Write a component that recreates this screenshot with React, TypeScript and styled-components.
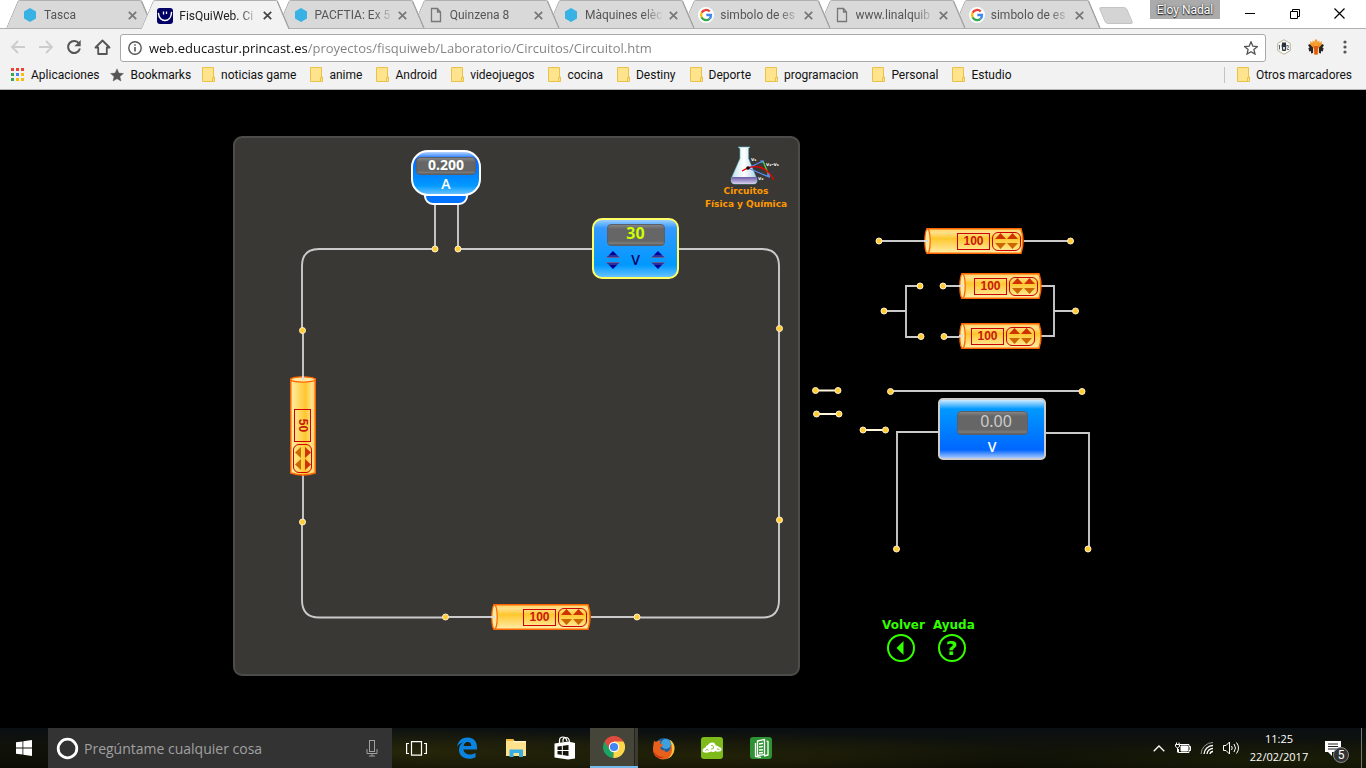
import React from "react";
import styled, { createGlobalStyle, css } from "styled-components";

const UI = `Roboto, "Open Sans", "Liberation Sans", sans-serif`;
const HUMANIST = `"Open Sans", "Noto Sans", sans-serif`;
const VERDANA = `"DejaVu Sans", "Liberation Sans", sans-serif`;
const METER = `"Noto Sans", "Open Sans", sans-serif`;

const GlobalStyle = createGlobalStyle`
  * { box-sizing: border-box; }
  html, body { margin: 0; background: #000; }
  body { font-family: ${UI}; font-size: 12px; color: #222; }
  button { border: 0; padding: 0; margin: 0; background: none; font: inherit; color: inherit; cursor: pointer; }
  input { border: 0; padding: 0; margin: 0; background: none; font: inherit; outline: 0; min-width: 0; }
  a { color: inherit; text-decoration: none; }
  svg { display: block; flex: none; }
`;

const Screen = styled.div`
  display: flex;
  flex-direction: column;
  min-height: 100vh;
  overflow: hidden;
`;

/* ---------- Tab strip ---------- */

const TabStrip = styled.header`
  display: flex;
  height: 29px;
  background: #fff;
  border-bottom: 1px solid #b0b0b0;
  padding-left: 6px;
`;

const Tabs = styled.nav`
  display: flex;
  flex: 0 1 1095px;
  min-width: 0;
  isolation: isolate;
`;

const TabBox = styled.div<{ $active?: boolean; $order: number }>`
  position: relative;
  z-index: ${(p) => (p.$active ? 50 : 20 - p.$order)};
  flex: 1 1 0;
  min-width: 0;
  display: flex;
  align-items: center;
  height: ${(p) => (p.$active ? 29 : 28)}px;
  padding: 2px 15px 0 16px;
  color: ${(p) => (p.$active ? "#222" : "#555")};
  & + & { margin-left: -13px; }

  &::before, &::after {
    content: "";
    position: absolute;
    z-index: -1;
    top: 0;
    bottom: 0;
    background: ${(p) => (p.$active ? "#f2f2f2" : "#d9d9d9")};
    border-top: 1px solid #b0b0b0;
  }
  &::before {
    left: 6px;
    right: 40%;
    border-left: 1px solid #a6a6a6;
    border-top-left-radius: 2px;
    transform: skewX(-23deg);
  }
  &::after {
    left: 40%;
    right: 6px;
    border-right: 2px solid #a6a6a6;
    border-top-right-radius: 2px;
    transform: skewX(23deg);
  }
`;

const TabLink = styled.a`
  flex: 1;
  min-width: 0;
  display: flex;
  align-items: center;
  gap: 6px;
`;

const TabTitle = styled.span`
  flex: 1;
  overflow: hidden;
  white-space: nowrap;
  line-height: 16px;
  mask-image: linear-gradient(90deg, #000 74%, transparent);
`;

const CloseButton = styled.button`
  width: 14px;
  height: 14px;
  margin-left: 2px;
  display: grid;
  place-items: center;
`;

const NewTab = styled.button`
  width: 28px;
  height: 17px;
  margin: 7px 0 0 1px;
  background: #d4d4d4;
  border: 1px solid #c4c4c4;
  border-radius: 3px;
  transform: skewX(23deg);
`;

const WindowControls = styled.div`
  margin-left: auto;
  padding-right: 4px;
  display: flex;
  align-items: flex-start;
`;

const UserTag = styled.button`
  width: 70px;
  height: 19px;
  background: #ababab;
  color: #fff;
  text-shadow: 0 0 2px #222, 0 1px 1px #222;
  line-height: 18px;
  margin-right: 7px;
`;

const WindowButton = styled.button`
  width: 45px;
  height: 27px;
  display: grid;
  place-items: center;
`;

/* ---------- Toolbar ---------- */

const Toolbar = styled.div`
  display: flex;
  align-items: center;
  height: 35px;
  padding: 0 10px 0 4px;
  background: #f2f2f2;
`;

const ToolButton = styled.button<{ $narrow?: boolean }>`
  width: ${(p) => (p.$narrow ? 22 : 28)}px;
  height: 28px;
  display: grid;
  place-items: center;
`;

const Extensions = styled.div`
  display: flex;
  gap: 4px;
`;

const AddressBox = styled.label`
  flex: 1;
  min-width: 0;
  height: 28px;
  margin: 2px 4px 0;
  padding: 0 7px;
  display: flex;
  align-items: center;
  gap: 7px;
  background: #fff;
  border: 1px solid #a9a9a9;
  border-radius: 3px;
`;

const AddressInput = styled.input`
  flex: 1;
  height: 24px;
  font-family: ${HUMANIST};
  font-size: 13px;
  color: #6f6f6f;
  -webkit-text-fill-color: transparent;
  background-image: linear-gradient(90deg, #111 158px, #808080 158px);
  -webkit-background-clip: text;
  background-clip: text;
`;

const BookmarkBar = styled.nav`
  display: flex;
  align-items: center;
  height: 26px;
  padding: 0 14px 4px 11px;
  background: #f2f2f2;
  border-bottom: 1px solid #b6b6b6;
`;

const Bookmark = styled.a<{ $tight?: boolean }>`
  display: flex;
  align-items: center;
  gap: 6px;
  margin-right: ${(p) => (p.$tight ? 11 : 14)}px;
  color: #111;
  line-height: 16px;
  white-space: nowrap;
  &:last-child { margin-right: 0; }
`;

const BookmarkDivider = styled.span`
  width: 1px;
  height: 16px;
  margin: 0 12px 0 auto;
  background: #c4c4c4;
`;

/* ---------- Circuit board ---------- */

const Page = styled.main`
  flex: 1;
  display: flex;
  justify-content: center;
  background: #000;
`;

const Board = styled.div`
  position: relative;
  flex: none;
  width: 1000px;
  min-height: 638px;
`;

const Placed = styled.div<{ $x: number; $y: number; $turned?: boolean }>`
  position: absolute;
  left: ${(p) => p.$x}px;
  top: ${(p) => p.$y}px;
  ${(p) => p.$turned && css`transform: rotate(90deg);`}
`;

const Panel = styled.div`
  width: 567px;
  height: 540px;
  background: #3a3834;
  border: 2px solid #4c4c4a;
  border-radius: 9px;
`;

const WireLayer = styled.svg`
  position: absolute;
  inset: 0;
`;

const Display = styled.output<{ $w: number; $h: number; $size: number; $bold?: boolean; $color: string; $indent?: number }>`
  display: block;
  width: ${(p) => p.$w}px;
  height: ${(p) => p.$h}px;
  padding-left: ${(p) => p.$indent ?? 0}px;
  line-height: ${(p) => p.$h - 5}px;
  font-family: ${METER};
  font-size: ${(p) => p.$size}px;
  font-weight: ${(p) => (p.$bold ? 700 : 400)};
  text-align: center;
  color: ${(p) => p.$color};
  background: linear-gradient(#858585, #666 4px, #666 80%, #7c7c7c 92%, #5a5a5a);
  border: 1px solid #5b5f68;
  border-radius: 4px;
`;

const Unit = styled.span<{ $color: string }>`
  font-family: ${HUMANIST};
  font-size: 14px;
  font-weight: 600;
  line-height: 18px;
  color: ${(p) => p.$color};
`;

const AmmeterCase = styled.div`
  width: 70px;
  height: 46px;
  display: flex;
  flex-direction: column;
  align-items: center;
  padding-top: 5px;
  border: 2px solid #fff;
  border-radius: 17px;
  background: linear-gradient(#b8d4ff, #0066ff 7px, #0099ff 80%, #66c2ff);
`;

const AmmeterBase = styled.div`
  width: 44px;
  height: 11px;
  margin: -2px auto 0;
  border: 2px solid #fff;
  border-radius: 0 0 9px 9px;
  background: #0073ff;
`;

const SourceCase = styled.div`
  width: 87px;
  height: 61px;
  display: flex;
  flex-direction: column;
  align-items: center;
  padding-top: 4px;
  border: 2px solid #ffff66;
  border-radius: 10px;
  background: linear-gradient(#9ccfff, #3399ff 8px, #0099ff 45px, #66c2ff);
`;

const SourceControls = styled.div`
  width: 60px;
  margin-top: 5px;
  display: flex;
  align-items: center;
  justify-content: space-between;
`;

const ArrowPair = styled.div`
  display: flex;
  flex-direction: column;
  gap: 4px;
`;

const ArrowButton = styled.button`
  display: block;
`;

const VoltmeterCase = styled.div`
  width: 108px;
  height: 62px;
  display: flex;
  flex-direction: column;
  align-items: center;
  gap: 3px;
  padding-top: 11px;
  border: 2px solid #ccc;
  border-radius: 5px;
  background: linear-gradient(#cfeaff, #0099ff 9px, #0066ff 50px, #a8c8ff);
`;

const ResistorBody = styled.div<{ $w: number; $pad: number }>`
  position: relative;
  width: ${(p) => p.$w}px;
  height: 26px;
  padding-left: ${(p) => p.$pad}px;
  display: flex;
  align-items: center;
  gap: 2px;
`;

const ResistorShape = styled.svg`
  position: absolute;
  inset: 0;
`;

const OhmInput = styled.input`
  position: relative;
  width: 33px;
  height: 17px;
  border: 1px solid #c00;
  font-family: "Liberation Sans", sans-serif;
  font-size: 12px;
  font-weight: 700;
  text-align: center;
  color: #c8180c;
`;

const Stepper = styled.div`
  position: relative;
  width: 29px;
  height: 19px;
  padding: 0 2px;
  display: grid;
  grid-template-columns: 11px 11px;
  align-content: center;
  justify-content: space-between;
  row-gap: 4px;
  border: 1px solid #c00;
  border-radius: 6px;
`;

const Brand = styled.div`
  width: 86px;
  display: flex;
  flex-direction: column;
  align-items: center;
  font-family: ${VERDANA};
  font-size: 9px;
  font-weight: 700;
  line-height: 13px;
  color: #ff9900;
  white-space: nowrap;
  & > svg { align-self: flex-end; margin-right: 3px; }
`;

const NavLinks = styled.nav`
  display: flex;
  gap: 8px;
`;

const NavLink = styled.a`
  display: flex;
  flex-direction: column;
  align-items: flex-start;
  gap: 1px;
  font-family: ${VERDANA};
  font-size: 12px;
  font-weight: 700;
  line-height: 16px;
  color: #33ff00;
`;

const Round = styled.span`
  width: 28px;
  height: 28px;
  margin-left: 5px;
  display: grid;
  place-items: center;
  border: 2px solid #33ff00;
  border-radius: 50%;
  font-size: 20px;
  line-height: 24px;
`;

/* ---------- Taskbar ---------- */

const Taskbar = styled.footer`
  display: flex;
  height: 40px;
  color: #fff;
  background:
    radial-gradient(ellipse 300px 26px at 30% 60%, #26260a, transparent),
    radial-gradient(ellipse 340px 24px at 52% 70%, #222208, transparent),
    radial-gradient(ellipse 300px 20px at 94% 80%, #1a1d07, transparent),
    linear-gradient(#0a0f13, #11130a 50%, #0c0c04);
`;

const TaskButton = styled.button<{ $active?: boolean }>`
  width: 48px;
  height: 40px;
  display: grid;
  place-items: center;
  ${(p) => p.$active && css`
    background: linear-gradient(90deg, #45453a 44px, #23231a 44px, #23231a 45px, #3b3b31 45px);
    border-bottom: 2px solid #76b9ed;
  `}
`;

const SearchBox = styled.label`
  flex: 0 1 344px;
  min-width: 0;
  display: flex;
  align-items: center;
  gap: 5px;
  padding: 0 14px 0 8px;
  background: #333;
`;

const SearchInput = styled.input`
  flex: 1;
  height: 24px;
  font-family: ${HUMANIST};
  font-size: 14px;
  color: #fff;
  &::placeholder { color: #a0a0a0; opacity: 1; }
`;

const TaskApps = styled.div`
  display: flex;
  gap: 1px;
  margin-left: 3px;
`;

const Tray = styled.div`
  margin-left: auto;
  display: flex;
  align-items: center;
`;

const TrayButton = styled.button`
  width: 24px;
  height: 40px;
  display: grid;
  place-items: center;
`;

const Clock = styled.time`
  width: 72px;
  text-align: center;
  font-family: ${HUMANIST};
  font-size: 11px;
  line-height: 18px;
  white-space: nowrap;
`;

const Notifications = styled.button`
  position: relative;
  width: 36px;
  height: 40px;
  margin: 0 10px 0 0;
  display: grid;
  place-items: center;
`;

const Badge = styled.span`
  position: absolute;
  left: 18px;
  top: 19px;
  width: 16px;
  height: 16px;
  border: 1px solid #888;
  border-radius: 50%;
  background: #333;
  font-size: 12px;
  line-height: 14px;
`;

const ShowDesktop = styled.button`
  width: 5px;
  height: 40px;
  border-left: 1px solid #777;
`;

/* ---------- Icons ---------- */

const Hexagon = () => (
  <svg width="16" height="16" viewBox="0 0 16 16"><path d="M8 1l6 3.500v7L8 15l-6-3.500v-7z" fill="#38b1e5" /></svg>
);
const Smile = () => (
  <svg width="16" height="16" viewBox="0 0 16 16">
    <rect width="16" height="16" rx="3" fill="#000066" />
    <path d="M1.500 5.500C2 15 14 15 14.500 4.500" fill="none" stroke="#fff" strokeWidth="1.500" strokeLinecap="round" />
    <path d="M6.500 3.500v3M9.500 3.500v2.500" stroke="#fff" strokeWidth="1.300" />
  </svg>
);
const PageIcon = () => (
  <svg width="16" height="16" viewBox="0 0 16 16">
    <path d="M3.500 1.500h6l3 3.500v9.500h-9zM9.500 1.500V5h3" fill="none" stroke="#777" strokeWidth="1.300" />
  </svg>
);
const Google = () => (
  <svg width="16" height="16" viewBox="0 0 16 16">
    <circle cx="8" cy="8" r="8" fill="#fff" />
    <g fill="none" strokeWidth="2.300">
      <path d="M11.700 4.500A5 5 0 0 0 3.600 5.800" stroke="#ea4335" />
      <path d="M3.600 5.800a5 5 0 0 0 0 4.400" stroke="#fbbc05" />
      <path d="M3.600 10.200a5 5 0 0 0 7.900 1.600" stroke="#34a853" />
      <path d="M11.500 11.800A5 5 0 0 0 13 8H8.300" stroke="#4285f4" />
    </g>
  </svg>
);
const Cross = ({ color = "#666" }) => (
  <svg width="9" height="9" viewBox="0 0 9 9"><path d="M.8.8l7.400 7.400M8.200.8L.8 8.200" stroke={color} strokeWidth="1.700" /></svg>
);
const Folder = () => (
  <svg width="13" height="15" viewBox="0 0 13 15">
    <path d="M.5.500h11v9.500h1v4.500H.5z" fill="#ffe48d" stroke="#e9c24a" />
    <path d="M10.500 14V10.500h1.500" fill="none" stroke="#e9c24a" />
  </svg>
);
const AppsGrid = () => {
  const colors = ["#ea4335", "#ea4335", "#ea4335", "#34a853", "#4285f4", "#fbbc05", "#34a853", "#fbbc05", "#fbbc05"];
  return (
    <svg width="14" height="14" viewBox="0 0 14 14">
      {colors.map((c, i) => <rect key={i} x={(i % 3) * 5} y={Math.floor(i / 3) * 5} width="3" height="3" fill={c} />)}
    </svg>
  );
};
const Star = ({ filled = false }) => (
  <svg width="14" height="14" viewBox="0 0 14 14">
    <path d="M7 .8l1.800 4.300 4.700.4-3.600 3 1.100 4.600L7 10.700l-4 2.400 1.100-4.600-3.600-3 4.700-.4z"
      fill={filled ? "#555" : "none"} stroke="#555" strokeWidth={filled ? 0.4 : 1.3} />
  </svg>
);
const BackArrow = ({ flip = false }) => (
  <svg width="16" height="14" viewBox="0 0 16 14">
    <path d={flip ? "M1 7h13M8 1l6 6-6 6" : "M15 7H2M8 1L2 7l6 6"} fill="none" stroke="#ccc" strokeWidth="1.800" />
  </svg>
);
const Reload = () => (
  <svg width="16" height="16" viewBox="0 0 16 16">
    <path d="M13 4.500A6 6 0 1 0 13.900 9.500" fill="none" stroke="#555" strokeWidth="2" />
    <path d="M14.700 1v6.300H8.400z" fill="#555" />
  </svg>
);
const Home = () => (
  <svg width="17" height="16" viewBox="0 0 17 16">
    <path d="M1.500 8.500l7-7 7 7h-2.700V15H4.200V8.500z" fill="none" stroke="#555" strokeWidth="1.800" strokeLinejoin="round" />
  </svg>
);
const Info = () => (
  <svg width="14" height="14" viewBox="0 0 14 14">
    <circle cx="7" cy="7" r="6.200" fill="none" stroke="#555" strokeWidth="1.400" />
    <path d="M7 6v4.500M7 3.300v1.500" stroke="#555" strokeWidth="1.600" />
  </svg>
);
const HexBadge = () => (
  <svg width="16" height="16" viewBox="0 0 16 16">
    <path d="M8 .7l6.300 3.700v7.200L8 15.300l-6.300-3.700V4.400z" fill="#fbfbf5" stroke="#b8b49c" />
    <path d="M6 3.500h4v2l.5.500-.8 6H6.300l-.8-6 .5-.5z" fill="#2b323d" />
    <path d="M3.500 6v4.500M2.800 6.500h.7M13 10.500h-1.800V9.500l1-1V6.500h-1.200" fill="none" stroke="#596170" />
    <path d="M7 8h2v2.500H7z" fill="#d5d8dc" />
  </svg>
);
const OrangeExt = () => (
  <svg width="16" height="16" viewBox="0 0 16 16">
    <path d="M0 6l2-1 3 2v7l-2 .5V12L1 12.500v-2L0 10l1.500-1.500zM16 6l-2-1-3 2v7l2 .5V12l2 .5v-2l1-.5-1.500-1.500z" fill="#2a2422" />
    <path d="M2 2l2.500 2V1.500L6.500 3 7 .500h2l.5 2.500 2-1.500V4L14 2l-.5 4-3 3-.5 6.500H6L5.500 9l-3-3z" fill="#f59a2a" />
    <path d="M5 6l2 2V4h2v4l2-2-1.200 4L9.500 15.500h-3L6.200 10z" fill="#dc5a12" />
    <path d="M7.400 3.500h1.200V7H7.400z" fill="#ffd070" />
  </svg>
);
const Dots = () => (
  <svg width="4" height="14" viewBox="0 0 4 14" fill="#555"><circle cx="2" cy="2" r="1.600" /><circle cx="2" cy="7" r="1.600" /><circle cx="2" cy="12" r="1.600" /></svg>
);
const Triangle = ({ w, h, down = false, color }: { w: number; h: number; down?: boolean; color: string }) => (
  <svg width={w} height={h} viewBox={`0 0 ${w} ${h}`}>
    <path d={down ? `M0 0H${w}L${w / 2} ${h}z` : `M0 ${h}H${w}L${w / 2} 0z`} fill={color} />
  </svg>
);
const SourceTriangle = ({ down = false }) => (
  <svg width="14" height="7" viewBox="0 0 14 7">
    <path d={down ? "M0 0H14L7 7z" : "M0 7H14L7 0z"} fill="#000099" />
    <path d={down ? "M0 .5H14M1.500 2H12.500" : "M0 6.500H14M1.500 5H12.500"} stroke="#77779c" strokeWidth=".8" />
  </svg>
);
const PlayLeft = () => (
  <svg width="24" height="24" viewBox="0 0 24 24"><path d="M14.500 5v14L7.500 12z" fill="#33ff00" /></svg>
);
const Flask = () => (
  <svg width="56" height="39" viewBox="0 0 56 39">
    <defs>
      <linearGradient id="glass"><stop offset="0" stopColor="#bfe3ea" /><stop offset=".5" stopColor="#fff" /><stop offset="1" stopColor="#a9cfe6" /></linearGradient>
      <linearGradient id="liquid" x1="0" y1="0" x2="0" y2="1"><stop offset="0" stopColor="#6a5aa8" /><stop offset="1" stopColor="#d9d2ee" /></linearGradient>
    </defs>
    <path d="M8 1h12l-1.500 1.500v10L26.500 32q2 6-3 6H5q-5 0-3.500-6L10 12.500v-10z" fill="url(#glass)" stroke="#5fb8c8" strokeWidth=".6" />
    <path d="M2 31h24.300q2 7-3 7H5q-5 0-3-7z" fill="url(#liquid)" />
    <path d="M18 22L33 15M18 22l21 9" stroke="#5a8cf0" strokeWidth="1.300" />
    <path d="M33 15l6.500 16" stroke="#5ad13c" strokeWidth="1.300" />
    <path d="M12 25q20-12 32 9" fill="none" stroke="#e00" strokeWidth="1.400" />
    <path d="M36 29.500l4 2.500-1-5zM30 14.500l4 0-2 3z" fill="#5a8cf0" />
    <circle cx="18" cy="22" r="1.800" fill="#200" />
    <g fill="#fff" fontFamily="DejaVu Sans, sans-serif" fontSize="5" fontWeight="700">
      <text x="21" y="15">v₁</text><text x="36" y="20">v₂-v₁</text><text x="28" y="34">v₂</text>
    </g>
  </svg>
);

/* ---------- Circuit parts ---------- */

function Resistor({ value, width = 100, pad = 33, name }: { value: string; width?: number; pad?: number; name: string }) {
  const gid = `body-${name.replace(/\s/g, "")}`;
  return (
    <ResistorBody $w={width} $pad={pad}>
      <ResistorShape width={width} height="26" viewBox={`0 0 ${width} 26`} aria-hidden="true">
        <defs>
          <linearGradient id={gid} x1="0" y1="0" x2="0" y2="1">
            <stop offset="0" stopColor="#ffd260" /><stop offset=".15" stopColor="#ffe08a" />
            <stop offset=".4" stopColor="#ffc72e" /><stop offset="1" stopColor="#ffeeaa" />
          </linearGradient>
        </defs>
        <path d={`M3 .8H${width - 3}Q${width + 1} 13 ${width - 3} 25.200H3z`} fill={`url(#${gid})`} stroke="#ff6600" strokeWidth="1.500" />
        <ellipse cx="3.500" cy="13" rx="2.700" ry="12.200" fill="#ffe9a0" stroke="#ff6600" strokeWidth="1.200" />
        <path d="M0 13h4" stroke="#ddd" strokeWidth="2" />
      </ResistorShape>
      <OhmInput defaultValue={value} aria-label={name} />
      <Stepper>
        <ArrowButton aria-label="Subir decenas"><Triangle w={11} h={6} color="#cc3300" /></ArrowButton>
        <ArrowButton aria-label="Subir unidades"><Triangle w={11} h={6} color="#cc3300" /></ArrowButton>
        <ArrowButton aria-label="Bajar decenas"><Triangle w={11} h={6} down color="#cc6600" /></ArrowButton>
        <ArrowButton aria-label="Bajar unidades"><Triangle w={11} h={6} down color="#cc6600" /></ArrowButton>
      </Stepper>
    </ResistorBody>
  );
}

const wires = [
  "M252 159H136Q119 159 119 176V240",
  "M120 240V287M120 385V432",
  "M119 432V510Q119 527.500 136 527.500H262",
  "M262 527H309M408 527H454",
  "M454 527.500H580Q596 527.500 596 510V176Q596 159 579 159H495",
  "M252 115V158M275 115V158M275 159H410",
  "M696 151H741M841 151H887",
  "M701 221H723M737 196H723V247H738M760 196H777M761 247H777",
  "M858 196H871V246H858M871 221H892",
  "M708 301H899",
  "M755 342H714V459M863 343H906V459",
];
const jumpers = ["M633 300.500H655", "M634 324H656", "M680 340H702"];
const terminals = [
  [252, 159], [275, 159], [119.5, 240.5], [119.5, 432], [262.5, 527], [454, 527], [596.5, 238.500], [596.5, 430],
  [696, 151], [887.5, 151], [701, 221], [737, 196], [738, 246.500], [760, 196], [761, 246.500], [892.5, 221],
  [632.5, 300.500], [655, 300.500], [633.5, 324], [656, 324], [680, 340], [702.5, 340], [707.5, 301.500], [899, 301.500],
  [713.5, 459], [905, 459],
];

const Wires = () => (
  <WireLayer width="1000" height="638" viewBox="0 0 1000 638" aria-hidden="true">
    <g fill="none" stroke="#cacaca" strokeWidth="1.900">
      {wires.map((d) => <path key={d} d={d} />)}
    </g>
    <g stroke="#fff6dd" strokeWidth="2">{jumpers.map((d) => <path key={d} d={d} />)}</g>
    <g fill="#ffcc33" stroke="#fff0cc" strokeWidth="1">
      {terminals.map(([x, y]) => <circle key={`${x}-${y}`} cx={x} cy={y} r="3" />)}
    </g>
  </WireLayer>
);

const SourceArrows = ({ name }: { name: string }) => (
  <ArrowPair>
    <ArrowButton aria-label={`Subir ${name}`}><SourceTriangle /></ArrowButton>
    <ArrowButton aria-label={`Bajar ${name}`}><SourceTriangle down /></ArrowButton>
  </ArrowPair>
);

/* ---------- Data ---------- */

const tabs = [
  { icon: <Hexagon />, title: "Tasca" },
  { icon: <Smile />, title: "FisQuiWeb. Ci", active: true },
  { icon: <Hexagon />, title: "PACFTIA: Ex 5" },
  { icon: <PageIcon />, title: "Quinzena 8" },
  { icon: <Hexagon />, title: "Màquines elèc" },
  { icon: <Google />, title: "simbolo de es" },
  { icon: <PageIcon />, title: "www.linalquib" },
  { icon: <Google />, title: "simbolo de es" },
];

const folders = ["noticias game", "anime", "Android", "videojuegos", "cocina", "Destiny", "Deporte", "programacion", "Personal", "Estudio"];

const WindowsLogo = () => (
  <svg width="16" height="16" viewBox="0 0 16 16" fill="#fff"><path d="M0 2.300L6.500 1.400V7.600H0zM7.300 1.300L16 0v7.600H7.300zM0 8.400h6.500v6.200L0 13.700zM7.300 8.400H16V16l-8.700-1.200z" /></svg>
);
const Cortana = () => (
  <svg width="23" height="23" viewBox="0 0 23 23"><circle cx="11.500" cy="11.500" r="9.300" fill="none" stroke="#fff" strokeWidth="2.800" /></svg>
);
const Mic = () => (
  <svg width="12" height="17" viewBox="0 0 12 17" fill="none" stroke="#a0a0a0"><rect x="3.500" y=".5" width="5" height="11" /><path d="M1 9v4.500h10V9M6 13.500V16M3 16h6" /></svg>
);
const TaskView = () => (
  <svg width="21" height="15" viewBox="0 0 21 15" fill="none" stroke="#fff" strokeWidth="1.200"><path d="M5.500.600h10v13.500h-10zM3 2.500H.6v10H3M18 2.500h2.400v10H18" /></svg>
);
const Edge = () => (
  <svg width="22" height="22" viewBox="0 0 22 22" fill="#0a84e0">
    <path d="M1 10C2 3.500 6.500.500 11.500.500 17.500.500 21 4.500 21 10v2.500H7.500c.3 3.500 3.300 5 6.500 5 2.200 0 4.200-.7 5.500-1.500v4.300c-1.500.8-3.800 1.500-6.500 1.500-6 0-10-3.500-10-9 0-3.300 1.700-6 4.500-7.500C4.500 6 2.200 7.700 1 10zM7.600 9h7.700c0-2.500-1.400-4-3.700-4S7.900 6.700 7.600 9z" />
  </svg>
);
const Explorer = () => (
  <svg width="22" height="20" viewBox="0 0 22 20">
    <path d="M1 1h7l1.500 2H21v15H1z" fill="#ffe08c" /><path d="M1 1h7l1.500 2H1z" fill="#f2b93c" /><path d="M8 3h13v1.500H8z" fill="#fff3c8" />
    <path d="M4.500 11.500h13.500V19h-4v-4h-5.500v4h-4z" fill="#35aee4" />
  </svg>
);
const Store = () => (
  <svg width="22" height="24" viewBox="0 0 22 24">
    <path d="M5.500 7V4.500Q5.500 1 9 1q3 0 4 4M9 6V4q0-2.500 3-2.500T15.500 6" fill="none" stroke="#fff" strokeWidth="1.200" />
    <path d="M.5 7.500L14 5.500l7 1.500v15.500l-7 1L.5 21.500z" fill="#fff" />
    <path d="M3.500 10.500l4.300-.6v4H3.500zM8.800 9.800l5.700-.8v4.900H8.800zM3.500 14.900h4.300v4l-4.300-.6zM8.800 14.900h5.700v5l-5.700-.9z" fill="#14140a" />
  </svg>
);
const Chrome = () => (
  <svg width="22" height="22" viewBox="0 0 22 22">
    <path d="M11 11L1.500 5.500A11 11 0 0 1 20.500 5.500z" fill="#e04b3d" />
    <path d="M11 11L1.500 5.500A11 11 0 0 0 10.500 22z" fill="#1da362" />
    <path d="M11 11l-.5 11A11 11 0 0 0 20.500 5.500H11z" fill="#ffd54a" />
    <path d="M1.500 5.500L6.800 13.500 11 6z" fill="#e04b3d" /><path d="M10.500 22l4.500-8.500L11 14z" fill="#ffd54a" />
    <circle cx="11" cy="11" r="5.200" fill="#fff" /><circle cx="11" cy="11" r="4.100" fill="#4285f4" />
  </svg>
);
const Firefox = () => (
  <svg width="23" height="23" viewBox="0 0 23 23">
    <circle cx="12" cy="11" r="10" fill="#1b5f9f" /><circle cx="14" cy="7" r="5" fill="#3ea1dd" />
    <path d="M2 3.500c.6.800 1.500 1.300 2.500 1.300C6 3.600 7.500 3.500 9 4L7.800 6.300 11 7.800c.3 1.500-2.500 1.700-2.500 3.200 0 2.300 3 2.500 4.500 2-1 2 1 2.500 3 1.500 2.500-1.500 3-4 2.500-7C21 9.500 21.500 12 21 15c-1.500 4.500-5.500 7.500-10 7.500C5 22 1 18 1 12.500 1 9 1.700 7 2 3.500z" fill="#e8601c" />
    <path d="M17.500 2.500c4 2.500 5.500 6 5 10A11 11 0 0 1 13 22.500c5-2 7-5.500 7-10 0-4-1-7-2.500-10z" fill="#ffc03a" />
    <path d="M2 14.500c2.500 4.500 6 6 10.500 5-5 3.500-9.500.5-10.500-5z" fill="#c93413" />
  </svg>
);
const CloudApp = () => (
  <svg width="22" height="22" viewBox="0 0 22 22">
    <rect width="22" height="22" rx="3" fill="#7fba1b" />
    <path d="M2 15q-1.500-3.500 2.500-4.500 0-2 2.500-2.500Q8.500 5 11.500 5.500q3 .3 3 3 2.500-.2 3.500 1.500 3 .5 2.500 3-1 2-3 1.500-2 .7-3-.7-1.500 2-4 .7Q6 16.500 2 15z" fill="#fff" />
    <path d="M4.500 13.500q1.500-2 3-.5M10 8.500q2-1 2.500 1.500T10 12M16 12q2-.5 2 1" fill="none" stroke="#7fba1b" strokeWidth=".9" />
  </svg>
);
const BookApp = () => (
  <svg width="22" height="22" viewBox="0 0 22 22">
    <rect width="22" height="22" rx="3" fill="#2f9232" />
    <path d="M7.500 4l7-1.500v15l-7 1zM5.500 6v13.500l5.500.8M16.500 4l1.500.5V18l-4 1" fill="none" stroke="#fff" strokeWidth="1.300" />
    <path d="M9 7l4-.8M9 10l4-.5M9 13l4-.3M9 16l4-.5" stroke="#fff" strokeWidth="1.400" />
  </svg>
);

const taskApps = [
  { name: "Edge", icon: <Edge /> },
  { name: "Explorador", icon: <Explorer /> },
  { name: "Tienda", icon: <Store /> },
  { name: "Chrome", icon: <Chrome />, active: true },
  { name: "Firefox", icon: <Firefox /> },
  { name: "Nube", icon: <CloudApp /> },
  { name: "Libro digital", icon: <BookApp /> },
];

export default function App() {
  return (
    <Screen>
      <GlobalStyle />
      <TabStrip>
        <Tabs>
          {tabs.map((t, i) => (
            <TabBox key={i} $order={i} $active={t.active}>
              <TabLink href="#">{t.icon}<TabTitle>{t.title}</TabTitle></TabLink>
              <CloseButton aria-label="Cerrar pestaña"><Cross color={t.active ? "#444" : "#777"} /></CloseButton>
            </TabBox>
          ))}
        </Tabs>
        <NewTab aria-label="Nueva pestaña" />
        <WindowControls>
          <UserTag>Eloy Nadal</UserTag>
          <WindowButton aria-label="Minimizar"><svg width="10" height="10"><path d="M0 4.500h10" stroke="#000" /></svg></WindowButton>
          <WindowButton aria-label="Restaurar"><svg width="10" height="10" fill="none" stroke="#000"><path d="M.5 2.500h7v7h-7zM2.500 2V.500h7v7H8" /></svg></WindowButton>
          <WindowButton aria-label="Cerrar"><svg width="11" height="11"><path d="M.5.500l10 10M10.500.500l-10 10" stroke="#000" strokeWidth="1.200" /></svg></WindowButton>
        </WindowControls>
      </TabStrip>

      <Toolbar>
        <ToolButton aria-label="Atrás"><BackArrow /></ToolButton>
        <ToolButton aria-label="Adelante"><BackArrow flip /></ToolButton>
        <ToolButton aria-label="Recargar"><Reload /></ToolButton>
        <ToolButton aria-label="Inicio"><Home /></ToolButton>
        <AddressBox>
          <Info />
          <AddressInput aria-label="Dirección" defaultValue="web.educastur.princast.es/proyectos/fisquiweb/Laboratorio/Circuitos/Circuitol.htm" />
          <Star />
        </AddressBox>
        <Extensions>
          <ToolButton aria-label="Extensión"><HexBadge /></ToolButton>
          <ToolButton aria-label="Extensión"><OrangeExt /></ToolButton>
          <ToolButton $narrow aria-label="Menú"><Dots /></ToolButton>
        </Extensions>
      </Toolbar>

      <BookmarkBar>
        <Bookmark $tight href="#"><AppsGrid />Aplicaciones</Bookmark>
        <Bookmark $tight href="#"><Star filled />Bookmarks</Bookmark>
        {folders.map((f) => <Bookmark key={f} href="#"><Folder />{f}</Bookmark>)}
        <BookmarkDivider />
        <Bookmark href="#"><Folder />Otros marcadores</Bookmark>
      </BookmarkBar>

      <Page>
        <Board>
          <Placed $x={50} $y={46}><Panel /></Placed>
          <Wires />
          <Placed $x={228} $y={60}>
            <AmmeterCase>
              <Display $w={60} $h={18} $size={14} $bold $color="#fff">0.200</Display>
              <Unit $color="#fff">A</Unit>
            </AmmeterCase>
            <AmmeterBase />
          </Placed>
          <Placed $x={409} $y={128}>
            <SourceCase>
              <Display $w={58} $h={22} $size={16} $bold $color="#ccff00">30</Display>
              <SourceControls>
                <SourceArrows name="decenas" />
                <Unit $color="#000066">V</Unit>
                <SourceArrows name="unidades" />
              </SourceControls>
            </SourceCase>
          </Placed>
          <Placed $x={520} $y={56}>
            <Brand><Flask /><span>Circuitos</span><span>Física y Química</span></Brand>
          </Placed>
          <Placed $x={70} $y={323} $turned><Resistor value="50" name="Resistencia 1" /></Placed>
          <Placed $x={308} $y={514}><Resistor value="100" pad={32} name="Resistencia 2" /></Placed>
          <Placed $x={741} $y={138}><Resistor value="100" name="Resistencia 3" /></Placed>
          <Placed $x={776} $y={183}><Resistor value="100" width={83} pad={15} name="Resistencia 4" /></Placed>
          <Placed $x={776} $y={233}><Resistor value="100" width={83} pad={12} name="Resistencia 5" /></Placed>
          <Placed $x={755} $y={308}>
            <VoltmeterCase>
              <Display $w={71} $h={24} $size={16} $indent={8} $color="#ccc">0.00</Display>
              <Unit $color="#fff">V</Unit>
            </VoltmeterCase>
          </Placed>
          <Placed $x={699} $y={527}>
            <NavLinks>
              <NavLink href="#">Volver<Round><PlayLeft /></Round></NavLink>
              <NavLink href="#">Ayuda<Round>?</Round></NavLink>
            </NavLinks>
          </Placed>
        </Board>
      </Page>

      <Taskbar>
        <TaskButton aria-label="Inicio"><WindowsLogo /></TaskButton>
        <SearchBox>
          <Cortana />
          <SearchInput aria-label="Buscar" placeholder="Pregúntame cualquier cosa" />
          <Mic />
        </SearchBox>
        <TaskButton aria-label="Vista de tareas"><TaskView /></TaskButton>
        <TaskApps>
          {taskApps.map((a) => <TaskButton key={a.name} aria-label={a.name} $active={a.active}>{a.icon}</TaskButton>)}
        </TaskApps>
        <Tray>
          <TrayButton aria-label="Mostrar iconos ocultos"><svg width="12" height="7" fill="none" stroke="#fff" strokeWidth="1.300"><path d="M.7 6.300L6 1l5.300 5.300" /></svg></TrayButton>
          <TrayButton aria-label="Batería"><svg width="16" height="12" fill="none" stroke="#fff"><path d="M4.500 2.500h9.500v8H3.500V7M14 4.500h1.500v4H14M1.500.500v2M4 .500v2M.5 2.500h4v2l-2 1.500-2-1.500zM2.500 6v4.500" /><path d="M6 4h6.500v5H6z" fill="#fff" /></svg></TrayButton>
          <TrayButton aria-label="Red"><svg width="14" height="14" fill="none" stroke="#fff"><path d="M1 13A12 12 0 0 1 13 1.500" stroke="#999" /><path d="M4 13a9 9 0 0 1 9-8.500M7 13a6 6 0 0 1 6-5.500M10 13a3 3 0 0 1 3-2.500" strokeWidth="1.300" /></svg></TrayButton>
          <TrayButton aria-label="Volumen"><svg width="17" height="14" fill="none" stroke="#fff"><path d="M.5 4.500H3L6.500 1v12L3 9.500H.5zM8.500 5q1.500 2 0 4M11 3q3 4 0 8M13.500 1.500q4 5.500 0 11" /></svg></TrayButton>
          <Clock>11:25<br />22/02/2017</Clock>
          <Notifications aria-label="Notificaciones">
            <svg width="16" height="15" viewBox="0 0 16 15"><path d="M0 0h16v11H7v4l-4-4H0z" fill="#fff" /><path d="M3 3h10M3 5.500h10M3 8h10" stroke="#222" /></svg>
            <Badge>5</Badge>
          </Notifications>
          <ShowDesktop aria-label="Mostrar escritorio" />
        </Tray>
      </Taskbar>
    </Screen>
  );
}
